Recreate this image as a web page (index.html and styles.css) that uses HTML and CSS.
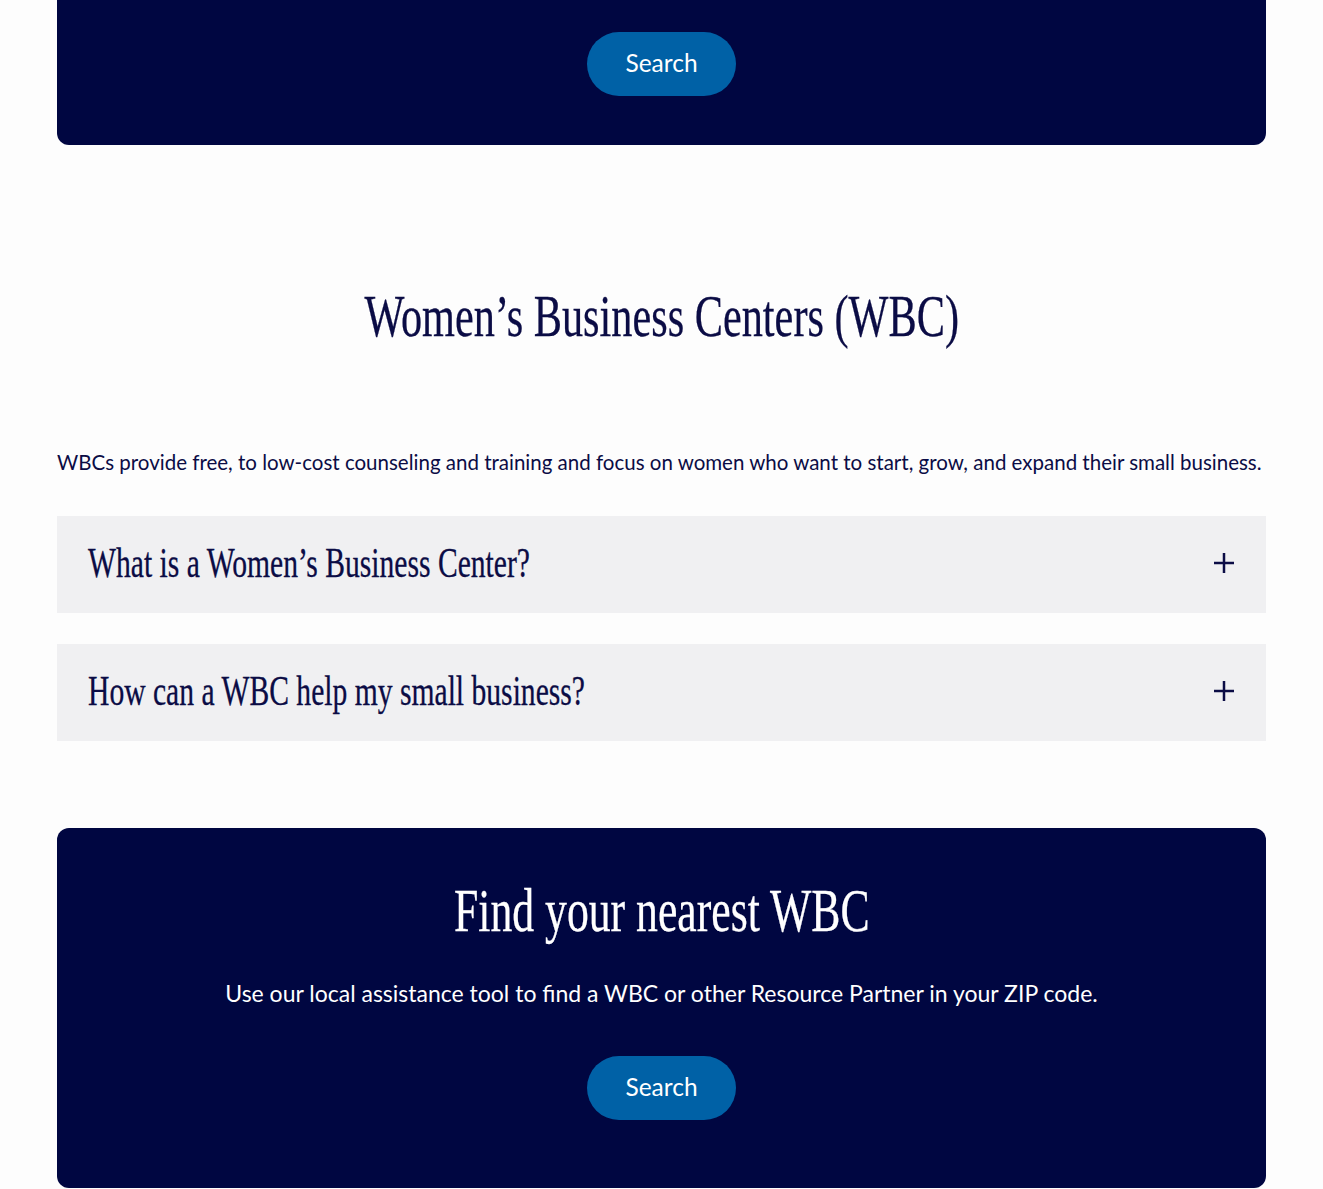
FILE: index.html
```html
<!DOCTYPE html>
<html lang="en">

<head>
    <meta charset="UTF-8" />
    <meta name="viewport" content="width=device-width, initial-scale=1.0" />
    <title>Women's Business Centers</title>
    <link rel="stylesheet" href="styles.css">
</head>

<body>
    <div class="page">
        <div class="cta cta-top">
            <a class="btn" href="#">Search</a>
        </div>

        <section class="wbc">
            <h2 class="section-title"><span>Women’s Business Centers (WBC)</span></h2>
            <p class="intro">WBCs provide free, to low-cost counseling and training and focus on women who want to start, grow, and expand their small business.</p>

            <div class="accordion">
                <button class="acc-item">
                    <span class="acc-title">What is a Women’s Business Center?</span>
                    <svg class="plus" width="22" height="22" viewBox="0 0 22 22"><path d="M11 1v20M1 11h20" /></svg>
                </button>
                <button class="acc-item">
                    <span class="acc-title">How can a WBC help my small business?</span>
                    <svg class="plus" width="22" height="22" viewBox="0 0 22 22"><path d="M11 1v20M1 11h20" /></svg>
                </button>
            </div>
        </section>

        <div class="cta">
            <h2 class="cta-title"><span>Find your nearest WBC</span></h2>
            <p class="cta-text">Use our local assistance tool to find a WBC or other Resource Partner in your ZIP code.</p>
            <a class="btn" href="#">Search</a>
        </div>
    </div>
</body>

</html>
```

FILE: styles.css
```css
body {
    margin: 0;
    background: #fdfdfd;
    font-family: Lato, "Noto Sans", sans-serif;
    color: #0b0c45;
}

.page {
    width: 1209px;
    margin: 0 auto;
}

/* dark call-to-action card */
.cta {
    display: flex;
    flex-direction: column;
    align-items: center;
    background: #000641;
    border-radius: 12px;
    padding: 46px 0 68px;
    color: #fff;
}

.cta-top {
    border-radius: 0 0 12px 12px;
    padding: 32px 0 49px;
}

.btn {
    display: inline-flex;
    align-items: center;
    justify-content: center;
    width: 149px;
    height: 64px;
    padding-bottom: 3px;
    box-sizing: border-box;
    border-radius: 32px;
    background: #0061a6;
    color: #fff;
    text-decoration: none;
    font-size: 24.5px;
}

/* condensed serif headings */
.section-title,
.cta-title,
.acc-title {
    font-family: "Liberation Serif", serif;
    font-weight: normal;
    -webkit-text-stroke: 0.3px currentColor;
}

.section-title span,
.cta-title span,
.acc-title {
    display: inline-block;
    transform: scaleX(0.705);
}

.section-title {
    margin: 135px 0 0;
    text-align: center;
    font-size: 60px;
    line-height: 72px;
    color: #0b0c45;
}

.intro {
    margin: 96px 0 40px;
    font-size: 20.5px;
    line-height: 28px;
}

.accordion {
    display: flex;
    flex-direction: column;
    gap: 31px;
    margin-bottom: 87px;
}

.acc-item {
    display: flex;
    align-items: center;
    justify-content: space-between;
    height: 97px;
    padding: 0 31px 4px 31px;
    border: 0;
    background: #f0f0f2;
    color: #0b0c45;
    cursor: pointer;
}

.acc-title {
    font-size: 42px;
    transform-origin: left center;
    white-space: nowrap;
}

.plus {
    stroke: #0b0c45;
    stroke-width: 2.5;
    fill: none;
}

.cta-title {
    margin: 0;
    font-size: 62px;
    line-height: 72px;
}

.cta-text {
    margin: 32px 0 48px;
    font-size: 23px;
    line-height: 30px;
}
```
